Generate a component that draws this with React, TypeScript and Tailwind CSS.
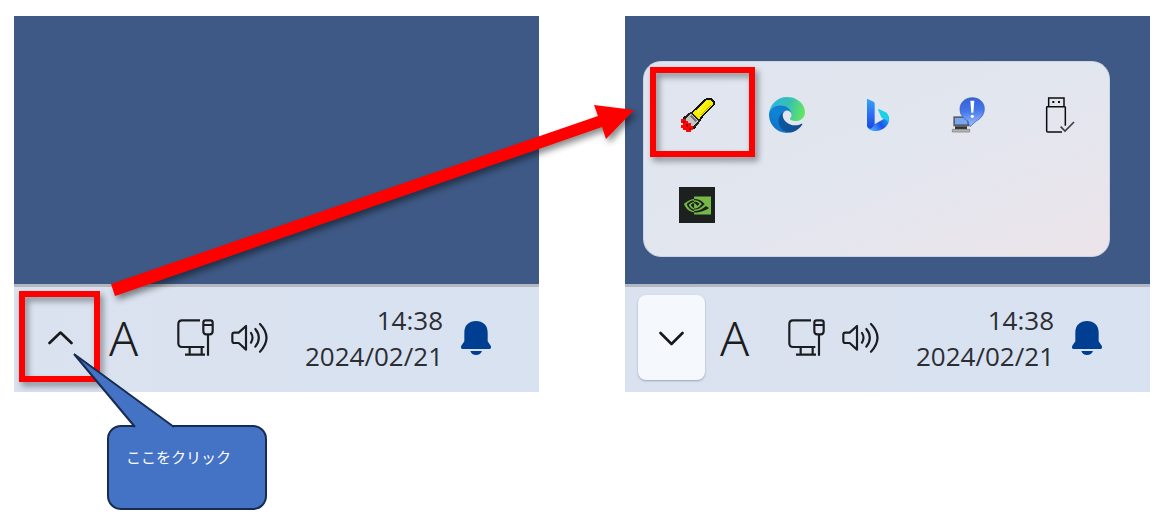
import type { ReactNode } from 'react';
import { SiNvidia } from 'react-icons/si';

function Chevron({ up = false }: { up?: boolean }) {
  return (
    <svg width="26" height="16" viewBox="0 0 26 16" fill="none" stroke="#16181c" strokeWidth="2.6" strokeLinecap="round" strokeLinejoin="round" aria-hidden="true">
      <path d={up ? 'M1.500 13 12.500 2.500 23.500 13' : 'M1.500 3 12.500 14 23.500 3'} />
    </svg>
  );
}

function NetworkIcon() {
  return (
    <svg width="37" height="37" viewBox="0 0 111 111" fill="none" stroke="#1b1d21" strokeWidth="6.500" strokeLinejoin="round" aria-hidden="true">
      <path d="M69 4H15Q4 4 4 15V73Q4 84 15 84H82" />
      <path d="M38 84V107M74 84V107M24 107H84" />
      <path d="M86 4H100Q107 4 107 11V36Q107 46 98 46H88Q79 46 79 36V11Q79 4 86 4ZM79 18H107M93 46V110" />
    </svg>
  );
}

function SpeakerIcon() {
  return (
    <svg width="37" height="37" viewBox="0 0 111 111" fill="none" stroke="#1b1d21" strokeWidth="6.500" strokeLinecap="round" strokeLinejoin="round" aria-hidden="true">
      <path d="M10 41H23L45 21V92L23 72H10Q4 72 4 66V47Q4 41 10 41Z" />
      <path d="M60 42Q69 56 60 71M73 30Q94 56 73 83M87 15Q126 56 87 98" />
    </svg>
  );
}

function BellIcon() {
  return (
    <svg width="30" height="35" viewBox="0 0 90 105" fill="#003e92" aria-hidden="true">
      <path d="M10 38C10 15 25 3 45 3S80 15 80 38V64L89 77C92 83 89 87 84 87H6C1 87-2 83 1 77L10 64Z" />
      <path d="M28 93H63C60 101 54 105 45 105S31 101 28 93Z" />
    </svg>
  );
}

function FlashlightIcon() {
  return (
    <svg width="36" height="36" viewBox="0 0 36 36" shapeRendering="crispEdges" aria-hidden="true">
      <path d="M28 1.500H31.500L34.500 4.500V8L23 19.500L21 23L15 31L5 21L12.500 16L15.500 13Z" fill="#f6ee00" stroke="#111" strokeWidth="2" />
      <path d="M12 15.500L20.500 24L13.500 31.500L4.500 22.500Z" fill="#c4c4c4" stroke="#222" strokeWidth="2" />
      <path d="M12 19L17.500 24.500" stroke="#777" strokeWidth="2" />
      <path d="M2 22H7V24H9V26H12V29H14V33H12V35H7V33H4V31H2V28H4V26H2Z" fill="#fa0808" />
      <path d="M4 24H6V26H4ZM7 27H9V30H7ZM10 31H12V33H10Z" fill="#b00000" />
      <path d="M29 4L18 15.500" stroke="#fff75a" strokeWidth="1" />
      <path d="M32 8L22 18" stroke="#b5ad00" strokeWidth="1" />
    </svg>
  );
}

function EdgeIcon() {
  return (
    <svg width="36" height="36" viewBox="0 0 256 256" aria-hidden="true">
      <defs>
        <linearGradient id="edge-a" x1="60" y1="178" x2="235" y2="178" gradientUnits="userSpaceOnUse">
          <stop stopColor="#0c59a4" />
          <stop offset="1" stopColor="#114a8b" />
        </linearGradient>
        <linearGradient id="edge-b" x1="150" y1="80" x2="45" y2="220" gradientUnits="userSpaceOnUse">
          <stop stopColor="#1478c8" />
          <stop offset=".5" stopColor="#0f84d6" />
          <stop offset="1" stopColor="#0f74ca" />
        </linearGradient>
        <linearGradient id="edge-c" x1="10" y1="60" x2="250" y2="120" gradientUnits="userSpaceOnUse">
          <stop stopColor="#2fb4e2" />
          <stop offset=".5" stopColor="#36c0b4" />
          <stop offset="1" stopColor="#66e85c" />
        </linearGradient>
      </defs>
      <path fill="url(#edge-a)" d="M231 190.500c-3.400 1.800-6.900 3.400-10.500 4.700a101.500 101.500 0 0 1-35.500 6.400c-46.800 0-87.600-32.200-87.600-73.500a31.200 31.200 0 0 1 16.300-27.100c-42.400 1.800-53.300 45.900-53.300 71.800 0 73.100 67.400 80.500 81.900 80.500 7.800 0 19.700-2.300 26.700-4.500l1.300-.4a128.300 128.300 0 0 0 66.600-52.800 4 4 0 0 0-5.900-5.100Z" />
      <path fill="url(#edge-b)" d="M105.700 241.400a79.200 79.200 0 0 1-22.700-21.300 80.700 80.700 0 0 1 29.500-120.500c3.100-1.500 8.400-4.100 15.500-3.900a32.400 32.400 0 0 1 25.700 13 31.900 31.900 0 0 1 6.300 18.700c0-.2 24.500-79.600-80-79.600-43.900 0-80 41.700-80 78.200a130.200 130.200 0 0 0 12.100 56 128 128 0 0 0 156.400 67.100 75.600 75.600 0 0 1-62.800-7.700Z" />
      <path fill="url(#edge-c)" d="M152.300 148.900c-.8 1-3.300 2.500-3.300 5.600 0 2.600 1.700 5.100 4.700 7.200 14.400 10 41.500 8.700 41.600 8.700a59.600 59.600 0 0 0 30.300-8.300A61.400 61.400 0 0 0 256 109.200c.3-22.400-8-37.300-11.300-43.900C223.500 23.800 177.700 0 128 0A128 128 0 0 0 0 126.200c.5-36.500 36.800-66 80-66 3.500 0 23.500.3 42 10 16.300 8.600 24.900 18.900 30.800 29.200 6.200 10.700 7.300 24.200 7.300 29.500 0 5.400-2.700 13.400-7.800 20Z" />
    </svg>
  );
}

function BingIcon() {
  return (
    <svg width="36" height="36" viewBox="0 0 108 108" aria-hidden="true">
      <defs>
        <linearGradient id="bing-a" x1="34" y1="4" x2="34" y2="98" gradientUnits="userSpaceOnUse">
          <stop stopColor="#34a6fa" />
          <stop offset=".5" stopColor="#2b6ff5" />
          <stop offset="1" stopColor="#1b45e0" />
        </linearGradient>
        <linearGradient id="bing-b" x1="35" y1="98" x2="90" y2="60" gradientUnits="userSpaceOnUse">
          <stop stopColor="#4bb4ff" />
          <stop offset=".5" stopColor="#1d50ee" />
          <stop offset="1" stopColor="#1eb2ee" />
        </linearGradient>
      </defs>
      <path fill="url(#bing-b)" d="M90 58C94 84 74 102 50 102C36 102 26 96 24 86L47 82L74 66Z" />
      <path fill="#18d2e8" d="M60 36L80 46C88 50 92 62 88 74C84 70 80 68 74 66L68 62C66 60 65 57 64 54L58 40C57 37 58 35 60 36Z" />
      <path fill="url(#bing-a)" d="M24 5L44 14Q47 16 47 20V82L38 94C30 97 24 92 24 85Z" />
    </svg>
  );
}

function NoticeIcon() {
  return (
    <svg width="36" height="36" viewBox="0 0 108 108" aria-hidden="true">
      <defs>
        <linearGradient id="notice-a" x1="60" y1="2" x2="70" y2="80" gradientUnits="userSpaceOnUse">
          <stop stopColor="#3560d4" />
          <stop offset=".5" stopColor="#4377ea" />
          <stop offset="1" stopColor="#8fb2fa" />
        </linearGradient>
      </defs>
      <path d="M13 58H60V88H13Z" fill="#5b5e63" />
      <path d="M18 63H55V82H18Z" fill="#78a6f2" />
      <path d="M18 88H54V97H18Z" fill="#303236" />
      <path d="M10 97H62V105H10Z" fill="#b5b5b0" stroke="#777" strokeWidth="2" />
      <path d="M70 2C91 2 106 16 106 35C106 53 94 66 82 72L63 89C60 84 59 78 57 72C43 66 33 53 33 36C33 16 49 2 70 2Z" fill="url(#notice-a)" stroke="#345bb8" strokeWidth="2" />
      <path d="M64 11H76L73 47H67Z" fill="#fff" />
      <circle cx="70" cy="58" r="5" fill="#fff" />
    </svg>
  );
}

function UsbIcon() {
  return (
    <svg width="36" height="36" viewBox="0 0 108 108" fill="none" stroke="#0b0c0d" strokeWidth="4.500" aria-hidden="true">
      <path d="M29 28V3H75V28M79 86V31Q79 29 77 29H25Q23 29 23 31V102Q23 105 26 105H69" />
      <path d="M40 12H46V18H40ZM57 12H63V18H57Z" fill="#0b0c0d" stroke="none" />
      <path d="M65 89L78 102L105 75" stroke="#3d3f43" strokeWidth="5" />
    </svg>
  );
}

function NvidiaIcon() {
  return (
    <span className="flex size-9 items-center justify-center bg-[#1c211f]">
      <SiNvidia size={27} color="#76b947" aria-hidden="true" />
    </span>
  );
}

function Taskbar({ children }: { children: ReactNode }) {
  return (
    <div className="flex h-[108px] items-center border-t-[3px] border-[#b3b8c0] bg-linear-to-r from-[#dbe2ef] to-[#d8e2f1] pr-12 pb-1 pl-[13px]">
      {children}
      <button type="button" aria-label="A" className="ml-[15px] w-7 text-center font-['Noto_Sans'] text-[48px] leading-none font-light text-[#1b1d21]">
        A
      </button>
      <button type="button" aria-label="Network" className="ml-10">
        <NetworkIcon />
      </button>
      <button type="button" aria-label="Volume" className="ml-[17px]">
        <SpeakerIcon />
      </button>
      <button type="button" className="ml-auto text-right font-['Open_Sans','Noto_Sans',sans-serif] text-[26px] leading-9 text-[#2b2e33]">
        <time className="block">14:38</time>
        <time className="block">2024/02/21</time>
      </button>
      <button type="button" aria-label="Notifications" className="ml-[18px]">
        <BellIcon />
      </button>
    </div>
  );
}

const trayItems: { name: string; icon: ReactNode; marked?: boolean }[] = [
  { name: 'Flashlight', icon: <FlashlightIcon />, marked: true },
  { name: 'Microsoft Edge', icon: <EdgeIcon /> },
  { name: 'Bing', icon: <BingIcon /> },
  { name: 'Network notice', icon: <NoticeIcon /> },
  { name: 'Safely remove hardware', icon: <UsbIcon /> },
  { name: 'NVIDIA', icon: <NvidiaIcon /> },
];

function Callout() {
  return (
    <div className="absolute top-[409px] left-[93px] h-[85px] w-40 rounded-[14px] border-2 border-[#172c51] bg-[#4472c4] px-[17px] py-4 font-['Noto_Sans_CJK_JP',sans-serif] text-[15px] leading-7 whitespace-nowrap text-white">
      ここをクリック
      <svg className="absolute -top-[77px] -left-[38px]" width="106" height="80" viewBox="0 0 106 80" aria-hidden="true">
        <path d="M64 80V77L3 4L103 77V80Z" fill="#4472c4" />
        <path d="M64 77L3 4L103 77" fill="none" stroke="#172c51" strokeWidth="2" />
      </svg>
    </div>
  );
}

function Arrow() {
  return (
    <svg className="pointer-events-none absolute top-[80px] left-[90px] drop-shadow-[3px_4px_3px_rgba(0,0,0,0.45)]" width="540" height="210" viewBox="0 0 540 210" aria-hidden="true">
      <path d="M7 188L494 20L490 9L530 14L502 43L498 31L11 200Z" fill="#ff0000" />
    </svg>
  );
}

export default function App() {
  return (
    <main className="min-h-screen bg-white px-3.5 pt-4">
      <div className="relative flex gap-[86px]">
        <section className="flex-1 bg-[#3e5985]">
          <div className="h-[268px]" />
          <Taskbar>
            <button type="button" aria-label="Show hidden icons" className="relative flex h-[85px] w-[67px] items-center justify-center">
              <Chevron up />
              <span className="absolute -top-1 -right-1.5 -bottom-0.5 -left-2 border-6 border-[#ff0000] drop-shadow-[3px_4px_3px_rgba(0,0,0,0.4)]" />
            </button>
          </Taskbar>
        </section>

        <section className="flex-1 bg-[#3e5985]">
          <div className="flex h-[268px] items-end pb-[27px] pl-[18px]">
            <div className="grid grid-cols-5 rounded-[18px] border border-[#ccd3e2] bg-linear-to-br from-[#dfe4ee] via-[#e2e6ef] to-[#ece4ea] pt-2 pr-[7px] pb-1.5 pl-2">
              {trayItems.map((item) => (
                <button key={item.name} type="button" aria-label={item.name} className="relative flex size-[90px] items-center justify-center">
                  {item.icon}
                  {item.marked && (
                    <span className="absolute -top-[3px] -left-0.5 h-[90px] w-[105px] border-6 border-[#ff0000] drop-shadow-[3px_4px_3px_rgba(0,0,0,0.4)]" />
                  )}
                </button>
              ))}
            </div>
          </div>
          <Taskbar>
            <button type="button" aria-label="Hide icons" className="flex h-[85px] w-[67px] items-center justify-center rounded-lg bg-[#f5f8fc] shadow-[0_1px_2px_rgba(90,105,135,0.5)]">
              <Chevron />
            </button>
          </Taskbar>
        </section>

        <Arrow />
        <Callout />
      </div>
    </main>
  );
}
